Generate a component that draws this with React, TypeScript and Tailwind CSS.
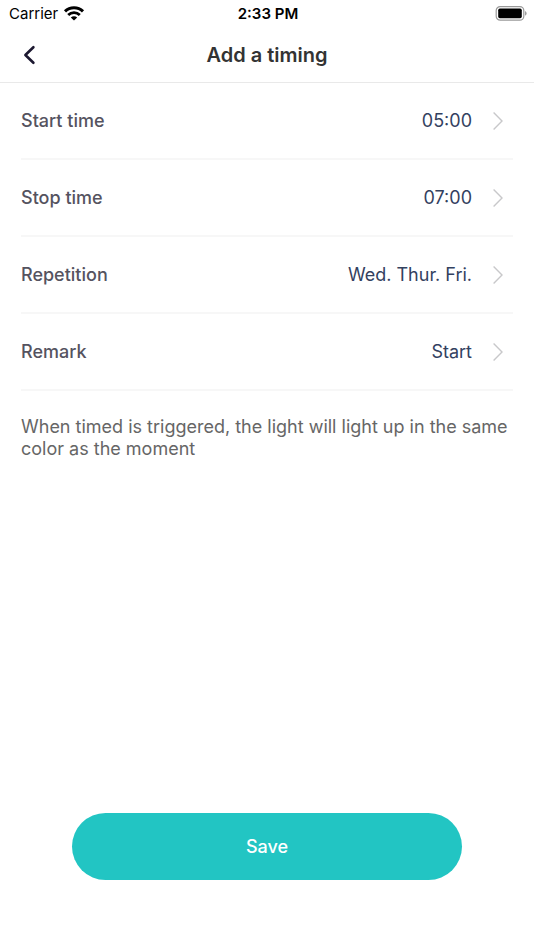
import React, { useState } from 'react'

interface TimingRowProps {
    label: string
    value: string
    onClick?: () => void
}

const ChevronRight: React.FC = () => (
    <svg width="12" height="20" viewBox="0 0 12 20" fill="none" aria-hidden="true">
        <path d="M1.6 1.6 L10 10 L1.6 18.4" stroke="#c8c8ca" strokeWidth="1.4" />
    </svg>
)

const TimingRow: React.FC<TimingRowProps> = ({ label, value, onClick }) => (
    <li className="border-b-2 border-[#f7f7f7]">
        <button
            type="button"
            onClick={onClick}
            className="flex h-[75px] w-full items-center text-left text-lg"
        >
            <span className="font-medium text-[#55535f]">{label}</span>
            <span className="ml-auto mr-5 text-[#33415f]">{value}</span>
            <span className="mr-[9px]">
                <ChevronRight />
            </span>
        </button>
    </li>
)

const StatusBar: React.FC = () => (
    <div className="grid h-7 grid-cols-3 items-center pl-[9px] pr-[7px] text-black">
        <div className="flex items-center gap-[5px]">
            <span className="text-[15px]">Carrier</span>
            <svg width="22" height="16" viewBox="0 0 22 16" fill="none" stroke="#000" aria-hidden="true">
                <path d="M2 5.4 C7 0.4 15 0.4 20 5.4" strokeWidth="3" />
                <path d="M5.2 9 C8.5 5.8 13.5 5.8 16.8 9" strokeWidth="2.8" />
                <path d="M11 14.6 L7.8 11.6 C9.6 9.9 12.4 9.9 14.2 11.6 Z" fill="#000" stroke="none" />
            </svg>
        </div>
        <span className="text-center text-[15px] font-semibold">2:33 PM</span>
        <svg className="justify-self-end" width="32" height="16" viewBox="0 0 32 16" fill="none" aria-hidden="true">
            <rect x="1.2" y="0.6" width="27.6" height="13.6" rx="4" stroke="#999" strokeWidth="1.2" />
            <rect x="3.2" y="2.6" width="23.6" height="9.6" rx="1.6" fill="#000" />
            <path d="M30.2 5 C32 5.8 32 9 30.2 9.8 Z" fill="#888" />
        </svg>
    </div>
)

const App: React.FC = () => {
    const [saved, setSaved] = useState(false)

    const rows = [
        { label: 'Start time', value: '05:00' },
        { label: 'Stop time', value: '07:00' },
        { label: 'Repetition', value: 'Wed. Thur. Fri.' },
        { label: 'Remark', value: 'Start' }
    ]

    return (
        <div className="flex min-h-screen flex-col bg-white font-['Inter',sans-serif]">
            <StatusBar />

            <header className="grid h-[55px] grid-cols-[60px_1fr_60px] items-center border-b border-[#e9e9e9]">
                <button type="button" aria-label="Back" className="flex h-full items-center pl-[22px]">
                    <svg width="14" height="20" viewBox="0 0 14 20" fill="none" aria-hidden="true">
                        <path
                            d="M11.4 2.2 L3.4 10 L11.4 17.8"
                            stroke="#1c1830"
                            strokeWidth="2.6"
                            strokeLinecap="round"
                            strokeLinejoin="round"
                        />
                    </svg>
                </button>
                <h1 className="text-center text-xl font-semibold text-[#333]">Add a timing</h1>
            </header>

            <main className="flex flex-1 flex-col px-[21px]">
                <ul>
                    {rows.map((row) => (
                        <TimingRow key={row.label} label={row.label} value={row.value} />
                    ))}
                </ul>
                <p className="mt-[25px] text-lg leading-[22px] text-[#666]">
                    When timed is triggered, the light will light up in the same color as the moment
                </p>
            </main>

            <footer className="px-[72px] pb-[70px] pt-6">
                <button
                    type="button"
                    aria-pressed={saved}
                    onClick={() => setSaved(true)}
                    className="h-[67px] w-full rounded-full bg-[#22c5c3] text-lg font-medium text-white"
                >
                    Save
                </button>
            </footer>
        </div>
    )
}

export default App
